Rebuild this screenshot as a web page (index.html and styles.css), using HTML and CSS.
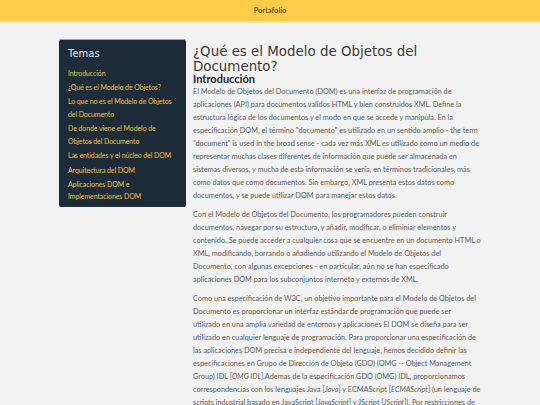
FILE: index.html
```html
<!DOCTYPE html>
<html lang="es">
<head>
<meta charset="utf-8">
<title>Portafolio</title>
<link rel="stylesheet" href="styles.css">
</head>
<body>
<header class="topbar">Portafolio</header>
<div class="layout">
  <nav class="sidebar">
    <h2 class="sidebar-title">Temas</h2>
    <ul class="topics">
      <li><a href="#">Introducción</a></li>
      <li><a href="#">¿Qué es el Modelo de Objetos?</a></li>
      <li><a href="#">Lo que no es el Modelo de Objetos del Documento</a></li>
      <li><a href="#">De donde viene el Modelo de Objetos del Documento</a></li>
      <li><a href="#">Las entidades y el núcleo del DOM</a></li>
      <li><a href="#">Arquitectura del DOM</a></li>
      <li><a href="#">Aplicaciones DOM e Implementaciones DOM</a></li>
    </ul>
  </nav>
  <main class="content">
    <h1 class="title">¿Qué es el Modelo de Objetos del Documento?</h1>
    <h2 class="subtitle">Introducción</h2>
    <p>El Modelo de Objetos del Documento (DOM) es una interfaz de programación de<br>
    aplicaciones (API) para documentos validos HTML y bien construidos XML. Define la<br>
    estructura lógica de los documentos y el modo en que se accede y manipula. En la<br>
    especificación DOM, el término "documento" es utilizado en un sentido amplio - the term<br>
    "document" is used in the broad sense - cada vez más XML es utilizado como un medio de<br>
    representar muchas clases diferentes de información que puede ser almacenada en<br>
    sistemas diversos, y mucha de esta información se vería, en términos tradicionales, más<br>
    como datos que como documentos. Sin embargo, XML presenta estos datos como<br>
    documentos, y se puede utilizar DOM para manejar estos datos.</p>
    <p>Con el Modelo de Objetos del Documento, los programadores pueden construir<br>
    documentos, navegar por su estructura, y añadir, modificar, o eliminiar elementos y<br>
    contenido. Se puede acceder a cualquier cosa que se encuentre en un documento HTML o<br>
    XML, modificando, borrando o añadiendo utilizando el Modelo de Objetos del<br>
    Documento, con algunas excepciones - en particular, aún no se han especificado<br>
    aplicaciones DOM para los subconjuntos interneto y externos de XML.</p>
    <p>Como una especificación de W3C, un objetivo importante para el Modelo de Objetos del<br>
    Documento es proporcionar un interfaz estándar de programación que puede ser<br>
    utilizado en una amplia variedad de entornos y aplicaciones El DOM se diseña para ser<br>
    utilizado en cualquier lenguaje de programación. Para proporcionar una especificación de<br>
    las aplicaciones DOM precisa e independiente del lenguaje, hemos decidido definir las<br>
    especificaciones en Grupo de Dirección de Objeto (GDO) (OMG -- Object Management<br>
    Group) IDL [<em>OMG IDL</em>].Ademas de la especificación GDO (OMG) IDL, proporcionamos<br>
    correspondencias con los lenguajes Java [<em>Java</em>] y ECMAScript [<em>ECMAScript</em>] (un lenguaje de<br>
    scripts industrial basado en JavaScript [<em>JavaScript</em>] y JScript [<em>JScript</em>]). Por restricciones de<br>
    espacio, el GDO IDL se utiliza solamente como un lenguaje independiente y neutral para<br>
    especificar las interfaces.</p>
  </main>
</div>
</body>
</html>
```
FILE: styles.css
```css
html, body {
  margin: 0;
  padding: 0;
}
body {
  background: #f2f2f2;
  font-family: Lato, "Liberation Sans", sans-serif;
  color: #5a5a5a;
}
.topbar {
  background: #ffcc4a;
  border-bottom: 2px solid #fde7a6;
  height: 21px;
  line-height: 21px;
  text-align: center;
  font-size: 7.6px;
  color: #3a3320;
}
.layout {
  display: flex;
  align-items: flex-start;
  gap: 7px;
  width: 440px;
  margin: 16px 0 0 59px;
}
.sidebar {
  flex: 0 0 127px;
  box-sizing: border-box;
  background: #1e2b38;
  border-top: 1px solid #9aa3ab;
  border-radius: 2px;
  padding: 7px 9px 4px 9px;
}
.sidebar-title {
  margin: 0 0 5.6px;
  font-family: "DejaVu Sans", sans-serif;
  font-weight: 400;
  font-size: 10px;
  line-height: 14px;
  color: #dfe5ea;
}
.topics {
  list-style: none;
  margin: 0;
  padding: 0;
  display: flex;
  flex-direction: column;
  gap: 1.9px;
  font-size: 7px;
  letter-spacing: -0.1px;
  line-height: 12.5px;
}
.topics a {
  color: #e9c24c;
  text-decoration: none;
}
.content {
  flex: 1;
  min-width: 0;
}
.title {
  margin: 6px 0 0;
  font-family: "DejaVu Sans", sans-serif;
  font-weight: 400;
  font-size: 13.4px;
  line-height: 14.6px;
  color: #3a3a3a;
  max-width: 290px;
}
.subtitle {
  margin: -1px 0 0;
  font-size: 11px;
  line-height: 12px;
  font-weight: 700;
  color: #222;
}
.content p {
  margin: 0 0 6px;
  font-size: 7.3px;
  line-height: 13px;
}
```
